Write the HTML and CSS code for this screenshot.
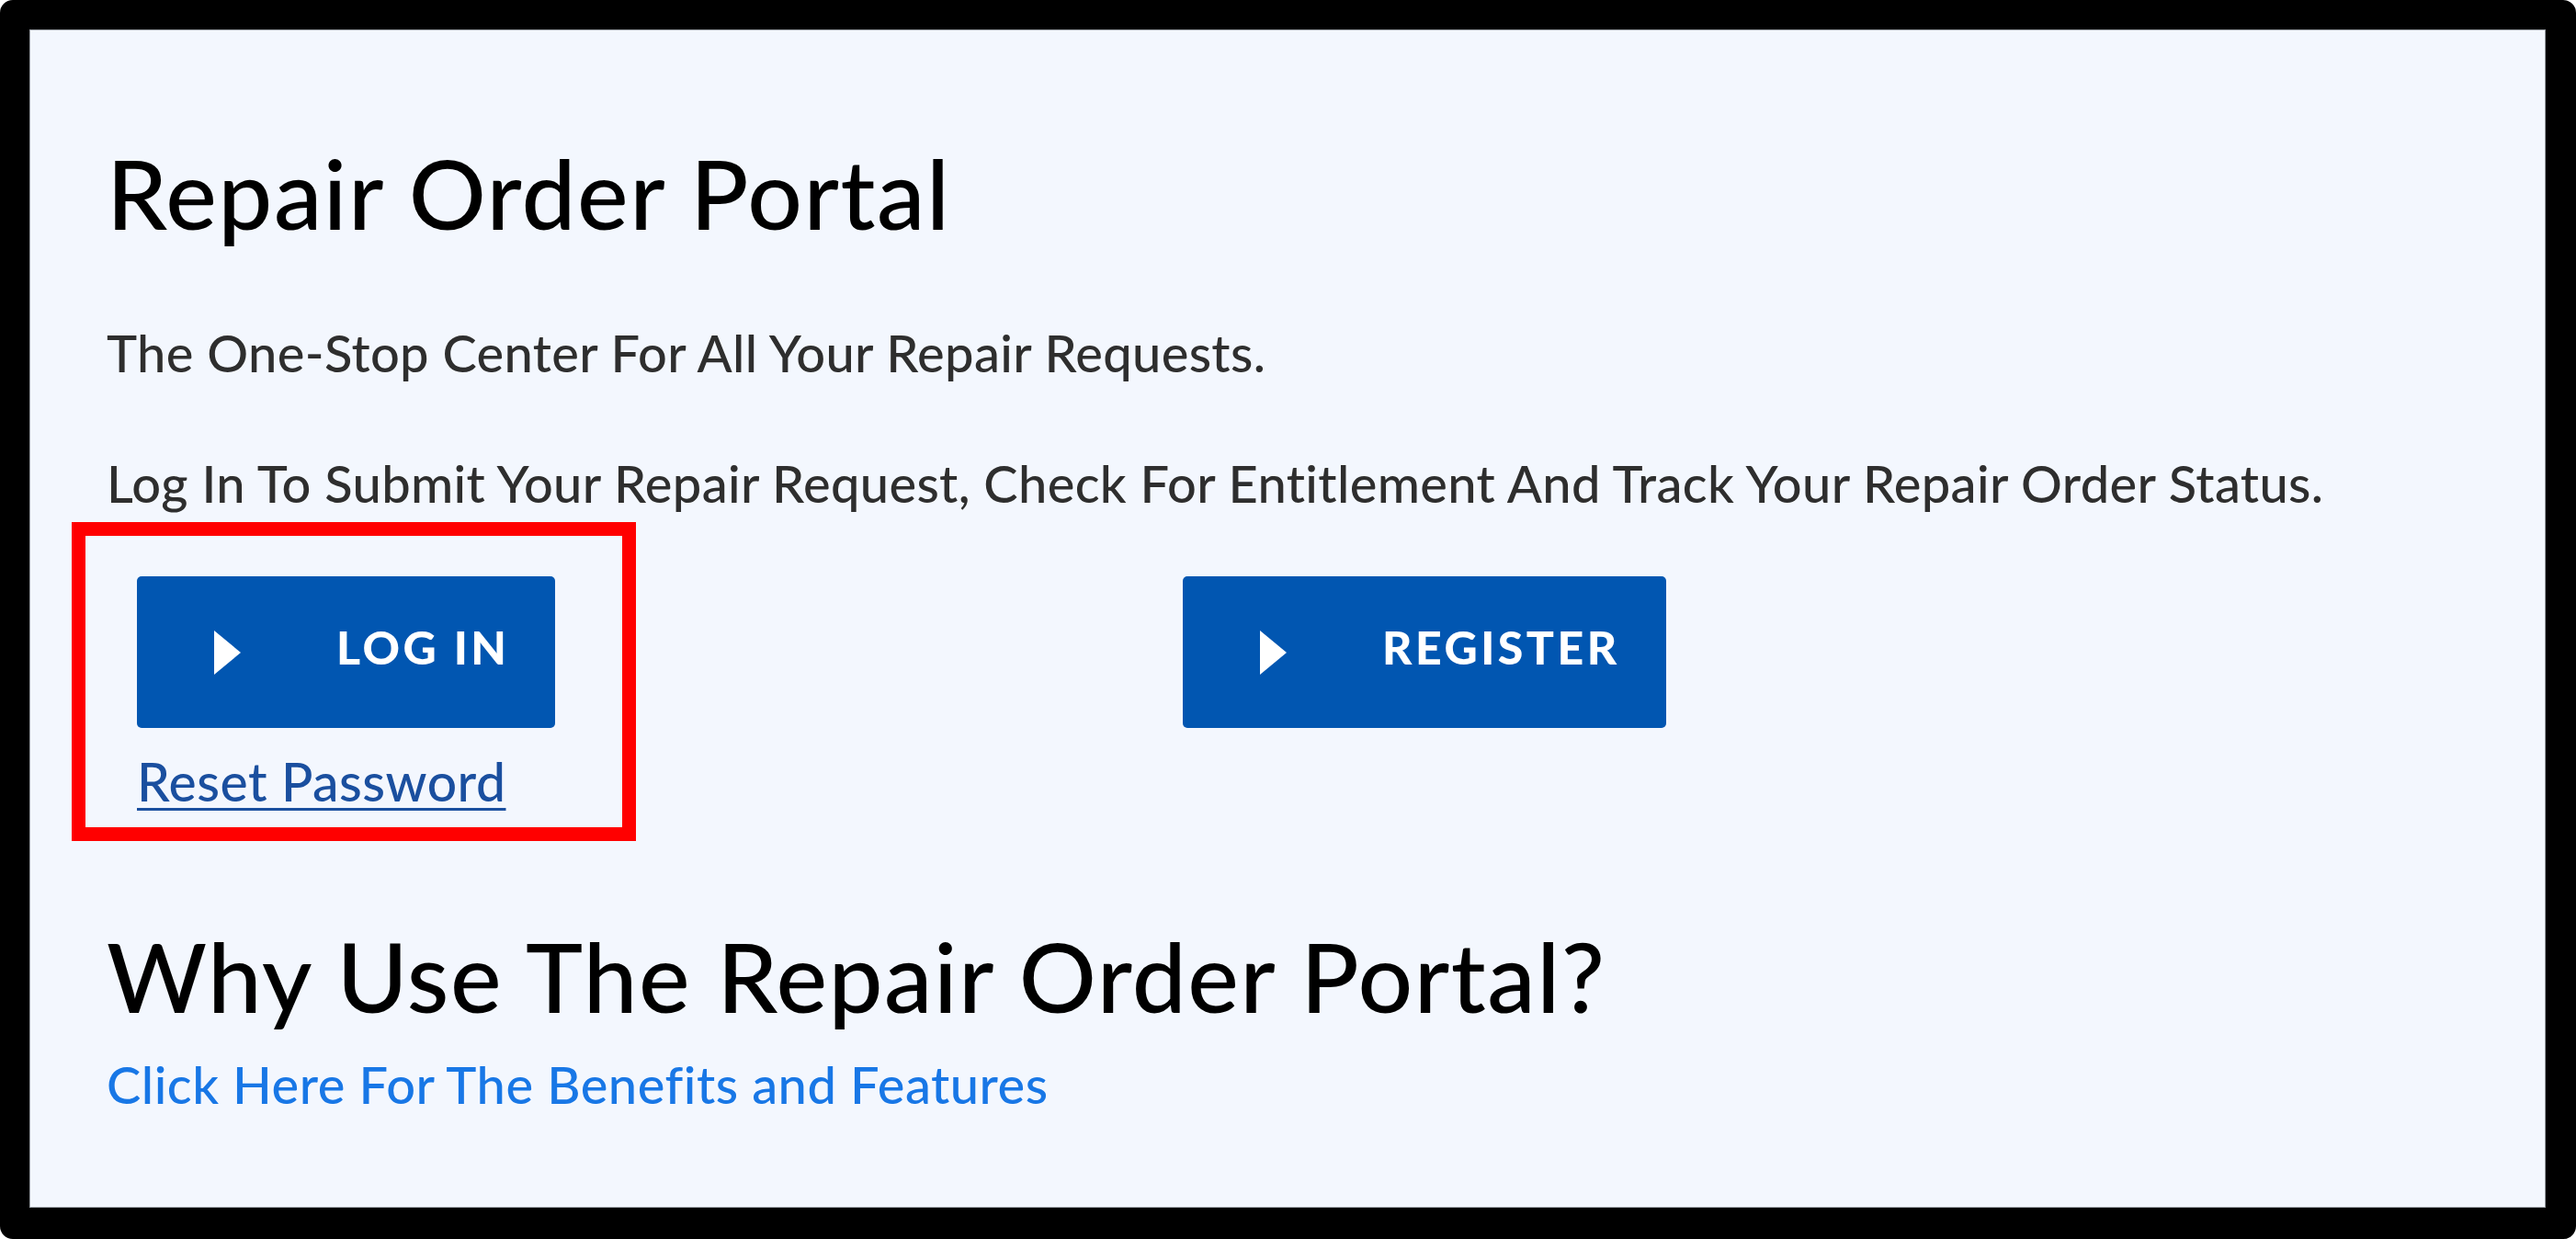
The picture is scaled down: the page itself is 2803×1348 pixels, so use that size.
FILE: index.html
```html
<!DOCTYPE html>
<html lang="en">
<head>
  <meta charset="UTF-8" />
  <meta name="viewport" content="width=device-width, initial-scale=1.0"/>
  <title>Repair Order Portal</title>
  <link rel="stylesheet" href="styles.css">
</head>
<body>
  <div class="frame">
    <main class="portal">
      <h1>Repair Order Portal</h1>
      <p class="lead">The One-Stop Center For All Your Repair Requests.</p>
      <p class="lead">Log In To Submit Your Repair Request, Check For Entitlement And Track Your Repair Order Status.</p>

      <div class="actions">
        <div class="action action-login">
          <a href="#" class="btn">
            <svg class="btn-arrow" viewBox="0 0 29 48"><polygon points="0,0 29,24 0,48" /></svg>
            <span class="btn-label">LOG IN</span>
          </a>
          <a href="#" class="reset-link">Reset Password</a>
          <span class="highlight"></span>
        </div>
        <div class="action">
          <a href="#" class="btn">
            <svg class="btn-arrow" viewBox="0 0 29 48"><polygon points="0,0 29,24 0,48" /></svg>
            <span class="btn-label">REGISTER</span>
          </a>
        </div>
      </div>

      <h2>Why Use The Repair Order Portal?</h2>
      <a href="#" class="benefits-link">Click Here For The Benefits and Features</a>
    </main>
  </div>
</body>
</html>
```
FILE: styles.css
```css
:root {
  --main-blue: #0156b1;
  --link-blue: #1877e6;
  --dark-link: #1a4f9f;
  --page-bg: #f3f7fe;
  --text-color: #2e2e2e;
}

* {
  margin: 0;
  padding: 0;
  box-sizing: border-box;
}

body {
  font-family: 'Lato', 'Open Sans', sans-serif;
  background-color: #ffffff;
  color: var(--text-color);
  line-height: 1.2;
}

.frame {
  height: 100vh;
  border: 32px solid #000;
  border-right-width: 33px;
  border-bottom-width: 34px;
  border-radius: 14px;
  background-color: var(--page-bg);
  box-shadow: inset 0 0 0 1px #9a9ea4;
  overflow: hidden;
}

.portal {
  padding: 114px 84px 0;
}

h1,
h2 {
  color: #000;
  font-size: 105px;
  font-weight: 500;
  letter-spacing: 1.5px;
}

.lead {
  font-size: 56px;
  font-weight: 500;
  letter-spacing: 0.35px;
  margin-top: 78px;
}

.lead + .lead {
  margin-top: 75px;
}

.actions {
  display: grid;
  grid-template-columns: 1138px auto;
  padding-left: 33px;
  margin-top: 68px;
  align-items: start;
}

.action {
  position: relative;
}

.btn {
  display: inline-flex;
  align-items: center;
  height: 165px;
  padding: 0 50px 0 84px;
  background-color: var(--main-blue);
  border-radius: 5px;
  color: #fff;
  text-decoration: none;
}

.btn-arrow {
  width: 29px;
  height: 48px;
  fill: #fff;
  flex-shrink: 0;
}

.btn-label {
  margin-left: 104px;
  padding-bottom: 12px;
  font-size: 50px;
  font-weight: 900;
  letter-spacing: 3.5px;
  line-height: 1;
}

.reset-link {
  display: block;
  width: max-content;
  margin-top: 24px;
  font-size: 57px;
  font-weight: 500;
  letter-spacing: 0.5px;
  color: var(--dark-link);
  text-decoration: underline;
  text-decoration-thickness: 3px;
  text-underline-offset: 7px;
}

/* red annotation box round the log in block */
.highlight {
  position: absolute;
  left: -71px;
  top: -59px;
  width: 614px;
  height: 347px;
  border: 15px solid #ff0000;
  pointer-events: none;
}

h2 {
  margin-top: 113px;
}

.benefits-link {
  display: block;
  width: max-content;
  margin-top: 22px;
  font-size: 56px;
  font-weight: 500;
  letter-spacing: 0.5px;
  color: var(--link-blue);
  text-decoration: none;
}
```
